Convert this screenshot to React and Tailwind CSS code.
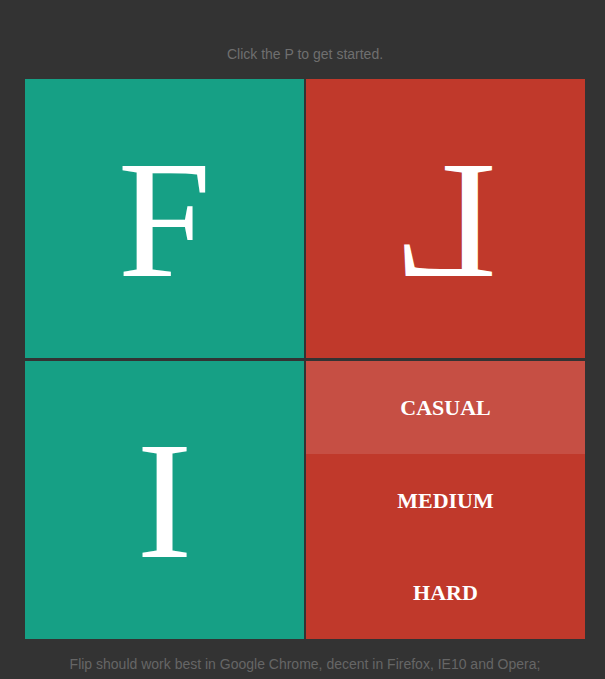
export default function App() {
  const serif = { fontFamily: '"Liberation Serif", "Times New Roman", serif' };
  return (
    <div className="min-h-[679px] bg-[#333333] pt-[44px]" style={{ fontFamily: '"Liberation Sans", Arial, sans-serif' }}>
      <div className="ml-[25px] w-[560px]">
        <p className="text-center text-[14px] leading-5 text-[#6f6f6f]">Click the P to get started.</p>
        <div className="mt-[15px] grid w-[560px] grid-cols-[279px_279px] grid-rows-[279px_278px] gap-x-[2px] gap-y-[3px]">
          <div className="flex items-center justify-center bg-[#16a085] text-white">
            <span className="text-[168px] leading-none" style={serif}>F</span>
          </div>
          <div className="flex items-center justify-center bg-[#c0392b] text-white">
            <span className="inline-block text-[168px] leading-none [transform:scaleX(-1)]" style={serif}>L</span>
          </div>
          <div className="flex items-center justify-center bg-[#16a085] text-white">
            <span className="text-[168px] leading-none" style={serif}>I</span>
          </div>
          <div className="flex flex-col bg-[#c0392b] text-white" style={serif}>
            <div className="flex flex-1 items-center justify-center bg-[#c64f44] text-[22px] font-bold">CASUAL</div>
            <div className="flex flex-1 items-center justify-center text-[22px] font-bold">MEDIUM</div>
            <div className="flex flex-1 items-center justify-center text-[22px] font-bold">HARD</div>
          </div>
        </div>
        <p className="mt-[15px] text-center text-[14px] leading-5 text-[#666666]">
          Flip should work best in Google Chrome, decent in Firefox, IE10 and Opera;
        </p>
      </div>
    </div>
  );
}
